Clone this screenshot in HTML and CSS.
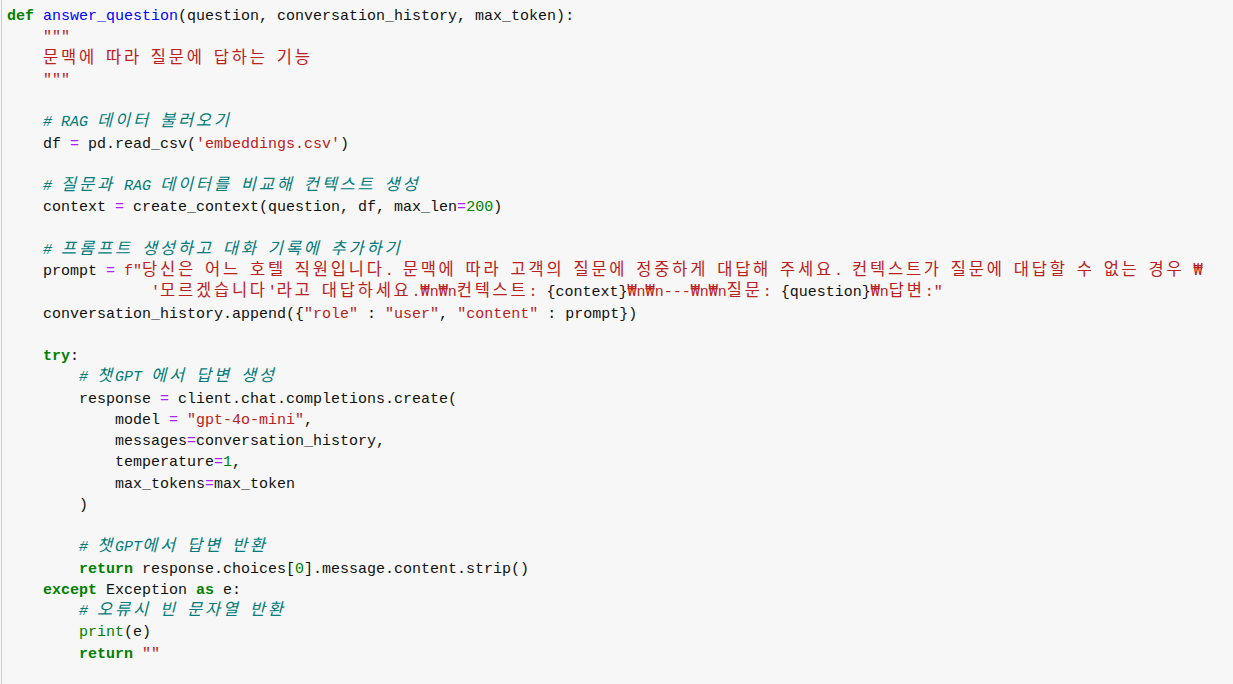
FILE: index.html
```html
<!DOCTYPE html>
<html lang="ko">
<head>
<meta charset="utf-8">
<title>answer_question</title>
<link rel="stylesheet" href="styles.css">
</head>
<body>
<div class="cell">
<pre class="code"><span class="kw">def</span> <span class="fn">answer_question</span>(question, conversation_history, max_token):
    <span class="str">"""</span>
    <span class="str"><span class="k">문맥에</span> <span class="k">따라</span> <span class="k">질문에</span> <span class="k">답하는</span> <span class="k">기능</span></span>
    <span class="str">"""</span>

    <span class="cmt"># RAG <span class="k">데이터</span> <span class="k">불러오기</span></span>
    df <span class="op">=</span> pd.read_csv(<span class="str">'embeddings.csv'</span>)

    <span class="cmt"># <span class="k">질문과</span> RAG <span class="k">데이터를</span> <span class="k">비교해</span> <span class="k">컨텍스트</span> <span class="k">생성</span></span>
    context <span class="op">=</span> create_context(question, df, max_len<span class="op">=</span><span class="num">200</span>)

    <span class="cmt"># <span class="k">프롬프트</span> <span class="k">생성하고</span> <span class="k">대화</span> <span class="k">기록에</span> <span class="k">추가하기</span></span>
    prompt <span class="op">=</span> <span class="str">f"<span class="k">당신은</span> <span class="k">어느</span> <span class="k">호텔</span> <span class="k">직원입니다</span>. <span class="k">문맥에</span> <span class="k">따라</span> <span class="k">고객의</span> <span class="k">질문에</span> <span class="k">정중하게</span> <span class="k">대답해</span> <span class="k">주세요</span>. <span class="k">컨텍스트가</span> <span class="k">질문에</span> <span class="k">대답할</span> <span class="k">수</span> <span class="k">없는</span> <span class="k">경우</span> <span class="w">₩</span></span>
                <span class="str">'<span class="k">모르겠습니다</span>'<span class="k">라고</span> <span class="k">대답하세요</span>.<span class="w">₩</span>n<span class="w">₩</span>n<span class="k">컨텍스트</span>: </span>{context}<span class="str"><span class="w">₩</span>n<span class="w">₩</span>n---<span class="w">₩</span>n<span class="w">₩</span>n<span class="k">질문</span>: </span>{question}<span class="str"><span class="w">₩</span>n<span class="k">답변</span>:"</span>
    conversation_history.append({<span class="str">"role"</span> : <span class="str">"user"</span>, <span class="str">"content"</span> : prompt})

    <span class="kw">try</span>:
        <span class="cmt"># <span class="k">챗</span>GPT <span class="k">에서</span> <span class="k">답변</span> <span class="k">생성</span></span>
        response <span class="op">=</span> client.chat.completions.create(
            model <span class="op">=</span> <span class="str">"gpt-4o-mini"</span>,
            messages<span class="op">=</span>conversation_history,
            temperature<span class="op">=</span><span class="num">1</span>,
            max_tokens<span class="op">=</span>max_token
        )

        <span class="cmt"># <span class="k">챗</span>GPT<span class="k">에서</span> <span class="k">답변</span> <span class="k">반환</span></span>
        <span class="kw">return</span> response.choices[<span class="num">0</span>].message.content.strip()
    <span class="kw">except</span> Exception <span class="kw">as</span> e:
        <span class="cmt"># <span class="k">오류시</span> <span class="k">빈</span> <span class="k">문자열</span> <span class="k">반환</span></span>
        <span class="bi">print</span>(e)
        <span class="kw">return</span> <span class="str">""</span></pre>
</div>
</body>
</html>
```

FILE: styles.css
```css
html, body {
  margin: 0;
  padding: 0;
  background: #f7f7f7;
}

.cell {
  margin-left: 1px;
  border-left: 1px solid #cfcfcf;
  min-height: 100vh;
  box-sizing: border-box;
  padding: 6px 0 0 5px;
  background: #f7f7f7;
}

.code {
  margin: 0;
  font-family: "Liberation Mono", "Noto Sans CJK KR", monospace;
  font-size: 15px;
  line-height: 21.25px;
  color: #111;
  white-space: pre;
}

.k {
  font-family: "Noto Sans CJK KR", sans-serif;
  font-size: 16.5px;
  letter-spacing: 2.78px;
  line-height: 0;
}

.w {
  font-family: "DejaVu Sans Mono", monospace;
  line-height: 0;
}

.kw {
  color: #008000;
  font-weight: bold;
}

.fn {
  color: #0000ff;
}

.op {
  color: #aa22ff;
}

.str {
  color: #ba2121;
}

.num {
  color: #008000;
}

.bi {
  color: #008000;
}

.cmt {
  color: #007b7b;
  font-style: italic;
}
```
